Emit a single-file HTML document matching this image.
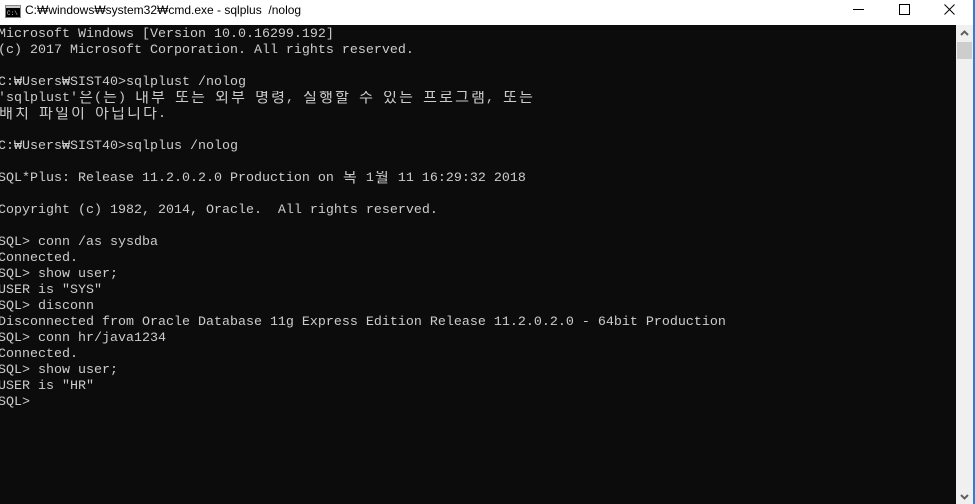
<!DOCTYPE html>
<html><head><meta charset="utf-8"><style>
body{margin:0;width:975px;height:504px;overflow:hidden;background:#0c0c0c;position:relative}
#tb{position:absolute;left:0;top:0;width:975px;height:25px;background:#fff}
#tb .t{position:absolute;left:25px;top:3px;font:12px "Liberation Sans","Noto Sans CJK KR",sans-serif;color:#000;white-space:pre}
#con{position:absolute;left:-2px;top:27px;width:958px;height:477px;background:#0c0c0c;color:#cccccc;font:13.33px/16px "Liberation Mono","Noto Sans CJK KR",monospace;white-space:pre;overflow:hidden}
#con div{height:16px;overflow:hidden}
#con i{display:inline-block;width:16px;height:16px;line-height:16px;vertical-align:top;font-style:normal;text-align:center;overflow:hidden;font-size:15px}
#sb{position:absolute;left:956px;top:25px;width:17px;height:479px;background:#f0f0f0}
#bl{position:absolute;left:973px;top:0;width:2px;height:504px;background:#2b7fd6}
</style></head><body>
<div id="tb">
<svg style="position:absolute;left:5px;top:5px" width="16" height="13"><rect x="0.5" y="0.5" width="15" height="12" fill="#000" stroke="#888"/><rect x="1" y="1" width="14" height="2" fill="#ccc"/><text x="2" y="10" font-size="6" fill="#ccc" font-family="Liberation Mono">C:\</text></svg>
<div class="t">C:₩windows₩system32₩cmd.exe - sqlplus  /nolog</div>
<svg style="position:absolute;left:853px;top:8px" width="12" height="3"><rect x="0" y="1" width="11" height="1" fill="#000"/></svg>
<svg style="position:absolute;left:899px;top:4px" width="12" height="12"><rect x="0.5" y="0.5" width="10" height="10" fill="none" stroke="#000"/></svg>
<svg style="position:absolute;left:944px;top:4px" width="12" height="12"><path d="M0.5 0.5L10.5 10.5M10.5 0.5L0.5 10.5" stroke="#000"/></svg>
</div>
<div id="con"><div>Microsoft Windows [Version 10.0.16299.192]</div><div>(c) 2017 Microsoft Corporation. All rights reserved.</div><div></div><div>C:₩Users₩SIST40>sqlplust /nolog</div><div>'sqlplust'<i>은</i>(<i>는</i>) <i>내</i><i>부</i> <i>또</i><i>는</i> <i>외</i><i>부</i> <i>명</i><i>령</i>, <i>실</i><i>행</i><i>할</i> <i>수</i> <i>있</i><i>는</i> <i>프</i><i>로</i><i>그</i><i>램</i>, <i>또</i><i>는</i></div><div><i>배</i><i>치</i> <i>파</i><i>일</i><i>이</i> <i>아</i><i>닙</i><i>니</i><i>다</i>.</div><div></div><div>C:₩Users₩SIST40>sqlplus /nolog</div><div></div><div>SQL*Plus: Release 11.2.0.2.0 Production on <i>목</i> 1<i>월</i> 11 16:29:32 2018</div><div></div><div>Copyright (c) 1982, 2014, Oracle.  All rights reserved.</div><div></div><div>SQL> conn /as sysdba</div><div>Connected.</div><div>SQL> show user;</div><div>USER is "SYS"</div><div>SQL> disconn</div><div>Disconnected from Oracle Database 11g Express Edition Release 11.2.0.2.0 - 64bit Production</div><div>SQL> conn hr/java1234</div><div>Connected.</div><div>SQL> show user;</div><div>USER is "HR"</div><div>SQL></div></div>
<div id="sb">
<svg style="position:absolute;left:4px;top:5px" width="9" height="6"><path d="M1 5L4.5 1.5L8 5" stroke="#606060" stroke-width="2" fill="none"/></svg>
<div style="position:absolute;left:1px;top:17px;width:15px;height:17px;background:#cdcdcd"></div>
<svg style="position:absolute;left:4px;top:469px" width="9" height="6"><path d="M1 1L4.5 4.5L8 1" stroke="#606060" stroke-width="2" fill="none"/></svg>
</div>
<div id="bl"></div>
</body></html>
